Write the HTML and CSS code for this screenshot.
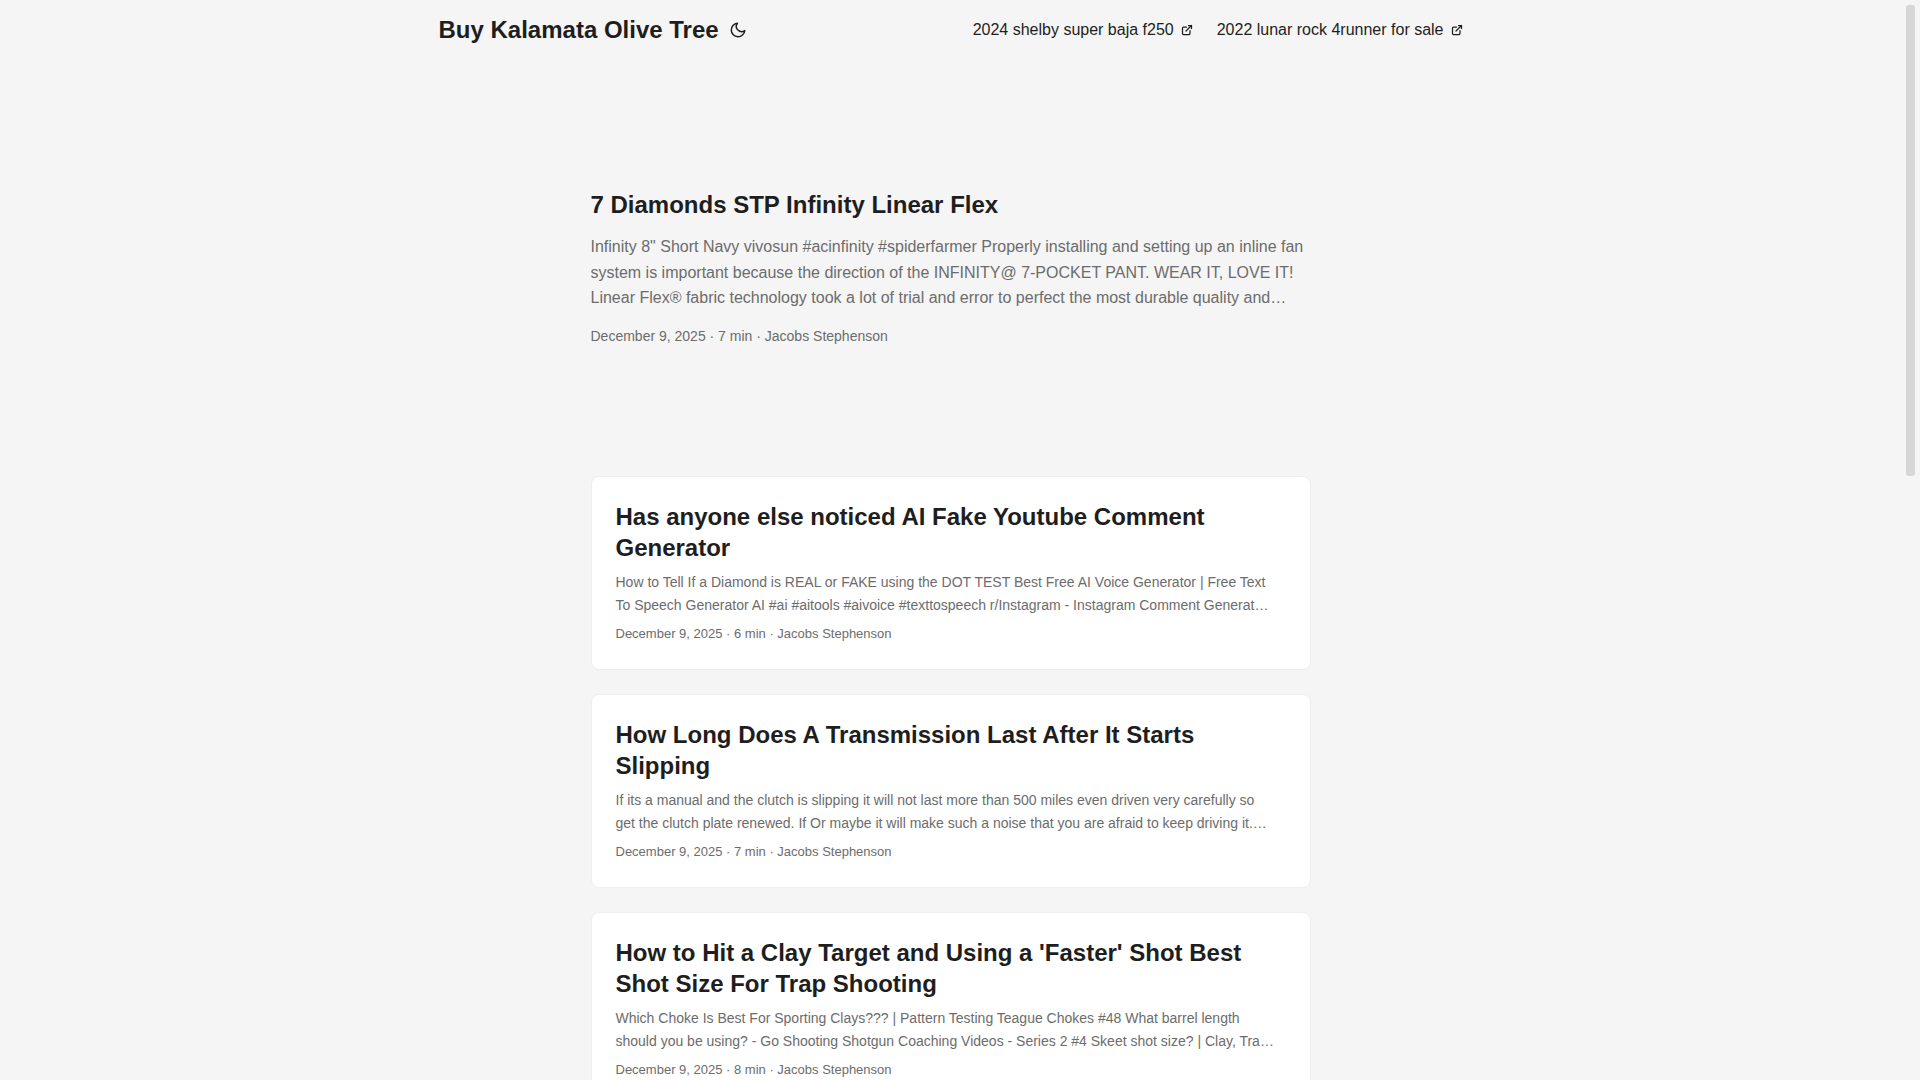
FILE: index.html
```
<!DOCTYPE html>
<html lang="en">

<head>
    <meta charset="UTF-8">
    <meta name="viewport" content="width=device-width, initial-scale=1.0">
    <title>Buy Kalamata Olive Tree</title>
    <link rel="stylesheet" href="styles.css">
</head>

<body>
    <header class="header">
        <nav class="nav">
            <div class="logo">
                <a href="#">Buy Kalamata Olive Tree</a>
                <button class="theme-toggle" type="button" aria-label="Toggle theme">
                    <svg width="24" height="18" viewBox="0 0 24 24" fill="none" stroke="currentColor" stroke-width="2" stroke-linecap="round" stroke-linejoin="round">
                        <path d="M21 12.79A9 9 0 1 1 11.21 3 7 7 0 0 0 21 12.79z"></path>
                    </svg>
                </button>
            </div>
            <ul class="menu">
                <li>
                    <a href="#"><span>2024 shelby super baja f250</span>
                        <svg width="12" height="12" viewBox="0 0 24 24" fill="none" stroke="currentColor" stroke-width="2.5" stroke-linecap="round" stroke-linejoin="round" shape-rendering="geometricPrecision">
                            <path d="M18 13v6a2 2 0 01-2 2H5a2 2 0 01-2-2V8a2 2 0 012-2h6"></path>
                            <path d="M15 3h6v6"></path>
                            <path d="M10 14L21 3"></path>
                        </svg>
                    </a>
                </li>
                <li>
                    <a href="#"><span>2022 lunar rock 4runner for sale</span>
                        <svg width="12" height="12" viewBox="0 0 24 24" fill="none" stroke="currentColor" stroke-width="2.5" stroke-linecap="round" stroke-linejoin="round" shape-rendering="geometricPrecision">
                            <path d="M18 13v6a2 2 0 01-2 2H5a2 2 0 01-2-2V8a2 2 0 012-2h6"></path>
                            <path d="M15 3h6v6"></path>
                            <path d="M10 14L21 3"></path>
                        </svg>
                    </a>
                </li>
            </ul>
        </nav>
    </header>

    <main class="main">
        <article class="first-entry">
            <h2><a href="#">7 Diamonds STP Infinity Linear Flex</a></h2>
            <p class="entry-content">Infinity 8" Short Navy vivosun #acinfinity #spiderfarmer Properly installing and setting up an inline fan system is important because the direction of the INFINITY@ 7-POCKET PANT. WEAR IT, LOVE IT! Linear Flex® fabric technology took a lot of trial and error to perfect the most durable quality and…</p>
            <footer class="entry-footer">December 9, 2025 · 7 min · Jacobs Stephenson</footer>
        </article>

        <article class="post-entry">
            <h2><a href="#">Has anyone else noticed AI Fake Youtube Comment Generator</a></h2>
            <p class="entry-content">How to Tell If a Diamond is REAL or FAKE using the DOT TEST Best Free AI Voice Generator | Free Text<br>To Speech Generator AI #ai #aitools #aivoice #texttospeech r/Instagram - Instagram Comment Generat…</p>
            <footer class="entry-footer">December 9, 2025 · 6 min · Jacobs Stephenson</footer>
        </article>

        <article class="post-entry">
            <h2><a href="#">How Long Does A Transmission Last After It Starts Slipping</a></h2>
            <p class="entry-content">If its a manual and the clutch is slipping it will not last more than 500 miles even driven very carefully so<br>get the clutch plate renewed. If Or maybe it will make such a noise that you are afraid to keep driving it.…</p>
            <footer class="entry-footer">December 9, 2025 · 7 min · Jacobs Stephenson</footer>
        </article>

        <article class="post-entry">
            <h2><a href="#">How to Hit a Clay Target and Using a 'Faster' Shot Best Shot Size For Trap Shooting</a></h2>
            <p class="entry-content">Which Choke Is Best For Sporting Clays??? | Pattern Testing Teague Chokes #48 What barrel length<br>should you be using? - Go Shooting Shotgun Coaching Videos - Series 2 #4 Skeet shot size? | Clay, Tra…</p>
            <footer class="entry-footer">December 9, 2025 · 8 min · Jacobs Stephenson</footer>
        </article>
    </main>

    <div class="scrollbar" aria-hidden="true">
        <div class="scrollbar-thumb"></div>
    </div>
</body>

</html>
```
FILE: styles.css
```
:root {
    --gap: 24px;
    --nav-width: 1024px;
    --main-width: 720px;
    --header-height: 60px;
    --scrollbar-width: 19px;
    --bg: #f5f5f5;
    --entry: #fff;
    --primary: #1e1e1e;
    --secondary: #6c6c6c;
    --tertiary: #d6d6d6;
    --border: #eee;
}

* {
    box-sizing: border-box;
    margin: 0;
    padding: 0;
}

html {
    scrollbar-width: none;
}

body {
    padding-right: var(--scrollbar-width);
    font-family: "Liberation Sans", Arial, sans-serif;
    font-size: 18px;
    line-height: 1.6;
    color: var(--primary);
    background: var(--bg);
    word-break: break-word;
}

a {
    color: var(--primary);
    text-decoration: none;
}

.nav {
    display: flex;
    flex-wrap: wrap;
    justify-content: space-between;
    max-width: calc(var(--nav-width) + var(--gap) * 2);
    margin: 0 auto;
    padding: 0 var(--gap);
    line-height: var(--header-height);
}

.logo {
    display: flex;
    align-items: center;
    gap: 7px;
}

.logo a {
    font-size: 24px;
    font-weight: 700;
}

.theme-toggle {
    display: flex;
    color: var(--primary);
    background: none;
    border: none;
    cursor: pointer;
}

.menu {
    display: flex;
    gap: var(--gap);
    list-style: none;
    font-size: 16px;
}

.menu a {
    display: flex;
    align-items: center;
    gap: 7px;
}

.main {
    max-width: calc(var(--main-width) + var(--gap) * 2);
    margin: 0 auto;
    padding: var(--gap);
}

.first-entry {
    display: flex;
    flex-direction: column;
    justify-content: center;
    min-height: 320px;
    margin: var(--gap) 0 48px;
}

.first-entry h2,
.post-entry h2 {
    font-size: 24px;
    line-height: 1.3;
}

.post-entry {
    margin-bottom: var(--gap);
    padding: var(--gap);
    background: var(--entry);
    border: 1px solid var(--border);
    border-radius: 8px;
}

.entry-content {
    margin: 8px 0;
    font-size: 14px;
    color: var(--secondary);
}

.first-entry .entry-content {
    margin: 14px 0;
    font-size: 16px;
}

.entry-footer {
    font-size: 13px;
    color: var(--secondary);
}

.first-entry .entry-footer {
    font-size: 14px;
}

.scrollbar {
    position: fixed;
    top: 0;
    right: 0;
    bottom: 0;
    width: var(--scrollbar-width);
    padding: 5px;
}

.scrollbar-thumb {
    height: 44%;
    background: var(--tertiary);
    border-radius: 3px;
}
```
